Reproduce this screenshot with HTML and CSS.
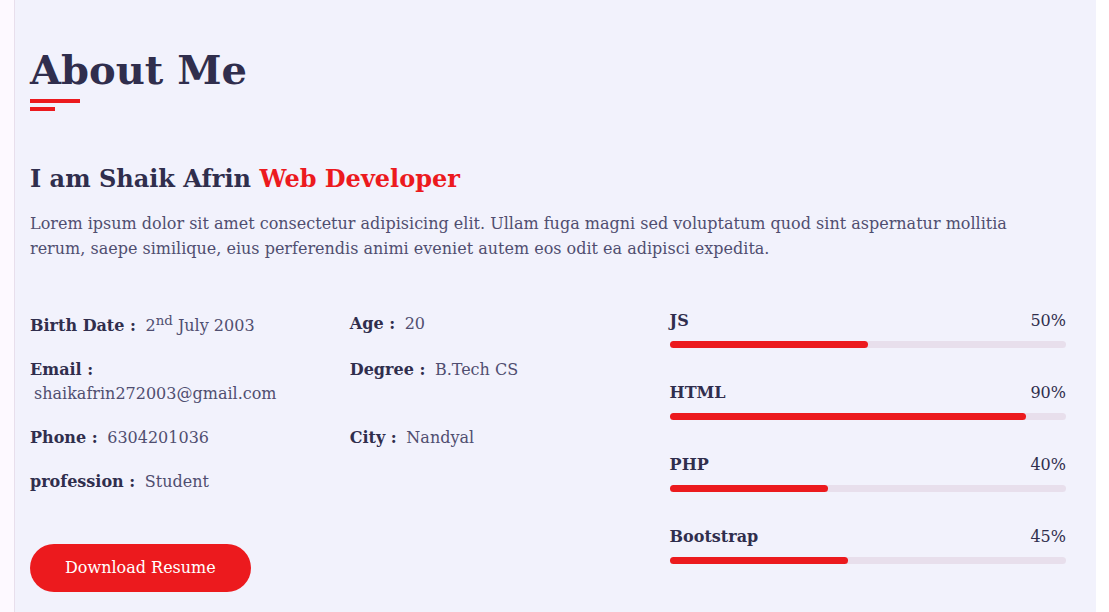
FILE: index.html
```html
<!DOCTYPE html>
<html lang="en">
<head>
<meta charset="utf-8">
<title>About Me</title>
<link rel="stylesheet" href="styles.css">
</head>
<body>
<aside class="sidebar"></aside>
<main class="main">
  <section class="about">
    <div class="section-title">
      <h2>About Me</h2>
      <div class="title-bars"><span class="bar bar-long"></span><span class="bar bar-short"></span></div>
    </div>
    <div class="about-text">
      <h3>I am Shaik Afrin <span class="skin">Web Developer</span></h3>
      <p>Lorem ipsum dolor sit amet consectetur adipisicing elit. Ullam fuga magni sed voluptatum quod sint aspernatur mollitia rerum, saepe similique, eius perferendis animi eveniet autem eos odit ea adipisci expedita.</p>
    </div>
    <div class="about-content">
      <div class="personal-info">
        <div class="info-grid">
          <p class="info-item">Birth Date : <span>2<sup>nd</sup> July 2003</span></p>
          <p class="info-item">Age : <span>20</span></p>
          <p class="info-item">Email : <span>shaikafrin272003@gmail.com</span></p>
          <p class="info-item">Degree : <span>B.Tech CS</span></p>
          <p class="info-item">Phone : <span>6304201036</span></p>
          <p class="info-item">City : <span>Nandyal</span></p>
          <p class="info-item">profession : <span>Student</span></p>
        </div>
        <div class="buttons">
          <a class="btn" href="#">Download Resume</a>
        </div>
      </div>
      <div class="skills">
        <div class="skill-item">
          <h5>JS</h5>
          <div class="progress"><div class="progress-in" style="width:50%"></div><span class="skill-percent">50%</span></div>
        </div>
        <div class="skill-item">
          <h5>HTML</h5>
          <div class="progress"><div class="progress-in" style="width:90%"></div><span class="skill-percent">90%</span></div>
        </div>
        <div class="skill-item">
          <h5>PHP</h5>
          <div class="progress"><div class="progress-in" style="width:40%"></div><span class="skill-percent">40%</span></div>
        </div>
        <div class="skill-item">
          <h5>Bootstrap</h5>
          <div class="progress"><div class="progress-in" style="width:45%"></div><span class="skill-percent">45%</span></div>
        </div>
      </div>
    </div>
  </section>
</main>
</body>
</html>
```
FILE: styles.css
```css
* {
  box-sizing: border-box;
}
html, body {
  height: 100%;
}
body {
  margin: 0;
  display: flex;
  background: #ffffff;
  font-family: "DejaVu Serif", serif;
  color: #302e4d;
  overflow: hidden;
}
.sidebar {
  width: 15px;
  flex: 0 0 15px;
  background: #fdf9ff;
  border-right: 1px solid #e8dfec;
}
.main {
  flex: 1;
  margin-right: 13px;
  background: #f2f2fc;
  padding: 47px 30px 0 15px;
}
.section-title h2 {
  margin: 0;
  font-size: 40px;
  line-height: 46px;
  font-weight: 700;
  color: #302e4d;
}
.title-bars {
  margin-top: 6px;
  display: flex;
  flex-direction: column;
  gap: 4px;
}
.bar {
  display: block;
  height: 4px;
  background: #ec1a1e;
}
.bar-long { width: 50px; }
.bar-short { width: 25px; }
.about-text h3 {
  margin: 54px 0 0;
  font-size: 24px;
  line-height: 28px;
  font-weight: 700;
}
.skin {
  color: #ec1a1e;
}
.about-text p {
  margin: 18px 0 0;
  font-size: 16px;
  line-height: 25px;
  color: #504e70;
  max-width: 1020px;
}
.about-content {
  margin-top: 41px;
  display: grid;
  grid-template-columns: calc(60% - 12px) 1fr;
  column-gap: 30px;
}
.info-grid {
  display: grid;
  grid-template-columns: 1fr 1fr;
  column-gap: 30px;
}
.info-item {
  margin: 0;
  padding: 10px 0;
  font-size: 16px;
  line-height: 24px;
  font-weight: 700;
  color: #302e4d;
}
.info-item span {
  display: inline-block;
  margin-left: 4px;
  font-weight: 400;
  color: #504e70;
}
.info-item sup {
  line-height: 18px;
}
.buttons {
  margin-top: 40px;
}
.btn {
  display: inline-block;
  padding: 12px 35px;
  font-size: 16px;
  line-height: 24px;
  color: #ffffff;
  background: #ec1a1e;
  border-radius: 40px;
  text-decoration: none;
  white-space: nowrap;
}
.skills {
  margin-top: -1px;
}
.skill-item {
  margin-bottom: 25px;
}
.skill-item h5 {
  margin: 0;
  font-size: 16px;
  line-height: 40px;
  font-weight: 700;
  color: #302e4d;
}
.progress {
  position: relative;
  height: 7px;
  border-radius: 4px;
  background: #e8dfec;
}
.progress-in {
  height: 100%;
  border-radius: 4px;
  background: #ec1a1e;
}
.skill-percent {
  position: absolute;
  right: 0;
  top: -40px;
  font-size: 16px;
  line-height: 40px;
  font-weight: 400;
  color: #302e4d;
}
```
